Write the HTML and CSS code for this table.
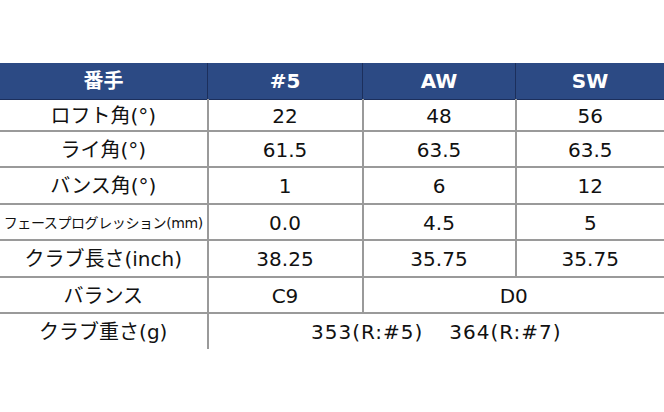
FILE: index.html
```html
<!DOCTYPE html>
<html lang="ja">
<head>
  <meta charset="UTF-8">
  <title>スペック表</title>
  <link rel="stylesheet" href="styles.css">
</head>
<body>
  <div class="spec-wrapper">
    <table class="spec-table">
      <thead>
        <tr class="spec-head">
          <th>番手</th>
          <th>#5</th>
          <th>AW</th>
          <th>SW</th>
        </tr>
      </thead>
      <tbody>
        <tr class="spec-row spec-row-first">
          <td>ロフト角(°)</td>
          <td>22</td>
          <td>48</td>
          <td>56</td>
        </tr>
        <tr class="spec-row">
          <td>ライ角(°)</td>
          <td>61.5</td>
          <td>63.5</td>
          <td>63.5</td>
        </tr>
        <tr class="spec-row">
          <td>バンス角(°)</td>
          <td>1</td>
          <td>6</td>
          <td>12</td>
        </tr>
        <tr class="spec-row">
          <td class="label-small">フェースプログレッション(mm)</td>
          <td>0.0</td>
          <td>4.5</td>
          <td>5</td>
        </tr>
        <tr class="spec-row">
          <td>クラブ長さ(inch)</td>
          <td>38.25</td>
          <td>35.75</td>
          <td>35.75</td>
        </tr>
        <tr class="spec-row">
          <td>バランス</td>
          <td>C9</td>
          <td colspan="2">D0</td>
        </tr>
        <tr class="spec-row spec-row-last">
          <td>クラブ重さ(g)</td>
          <td colspan="3" class="weight-cell">353(R:#5)<span class="weight-gap"></span>364(R:#7)</td>
        </tr>
      </tbody>
    </table>
  </div>
</body>
</html>
```

FILE: styles.css
```css
body {
  margin: 0;
  padding: 0;
  background-color: #fff;
  font-family: "DejaVu Sans", "Noto Sans CJK JP", sans-serif;
}

.spec-wrapper {
  padding-top: 63px;
}

.spec-table {
  width: 100%;
  border-collapse: collapse;
  table-layout: fixed;
}

.spec-table th,
.spec-table td {
  padding: 0;
  text-align: center;
  white-space: nowrap;
  font-size: 20px;
  line-height: 1;
}

.spec-table th:nth-child(1) { width: 207px; }
.spec-table th:nth-child(2) { width: 154px; }
.spec-table th:nth-child(3) { width: 152px; }

.spec-head th {
  height: 36px;
  background-color: #2c4a84;
  color: #fff;
  font-weight: bold;
  border-left: 1px solid #1c2f5c;
  border-bottom: 1px solid #1c2f5c;
}

.spec-head th:first-child {
  border-left: none;
}

.spec-row td {
  height: 32.5px;
  color: #111;
  border-left: 2px solid #9a9a9a;
  border-bottom: 2px solid #9a9a9a;
  padding-top: 2px;
}

.spec-row td:first-child {
  border-left: none;
}

.spec-row-first td {
  height: 27.5px;
}

.spec-row-last td {
  border-bottom: none;
}

.label-small {
  font-size: 14px !important;
  letter-spacing: -0.4px;
}

.weight-cell {
  letter-spacing: 1px;
}

.weight-gap {
  display: inline-block;
  width: 26px;
}
```
